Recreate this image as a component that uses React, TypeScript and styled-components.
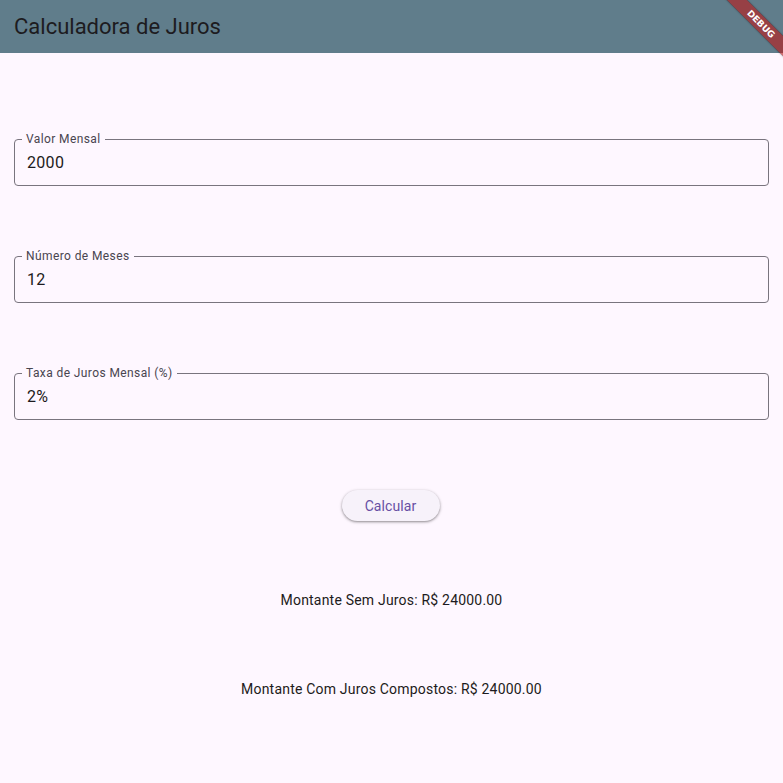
import React from "react";
import styled, { createGlobalStyle } from "styled-components";

const Global = createGlobalStyle`
  html, body { margin: 0; padding: 0; background: #fef7ff; }
  body { font-family: Roboto, "Noto Sans", sans-serif; color: #1d1b20; }
  * { box-sizing: border-box; }
`;

const Page = styled.div`
  min-height: 783px;
  background: #fef7ff;
  position: relative;
  overflow: hidden;
`;

const AppBar = styled.header`
  height: 53px;
  background: #607d8b;
  display: flex;
  align-items: center;
  padding: 0 14px;
`;

const Title = styled.h1`
  margin: 0;
  font-size: 22px;
  font-weight: 400;
  color: #1d1b20;
  letter-spacing: 0;
`;

const Body = styled.main`
  padding: 79px 14px 0;
  display: flex;
  flex-direction: column;
`;

const Field = styled.fieldset`
  margin: 0 0 63px;
  padding: 0 11px 7px;
  border: 1px solid #79747e;
  border-radius: 4px;
  min-width: 0;
`;

const Legend = styled.legend`
  padding: 0 4px;
  margin-left: -4px;
  font-size: 12px;
  line-height: 14px;
  color: #49454f;
  letter-spacing: 0.4px;
`;

const Input = styled.input`
  display: block;
  width: 100%;
  height: 30px;
  margin-top: 2px;
  line-height: 30px;
  border: none;
  outline: none;
  background: transparent;
  padding: 0 0 0 1px;
  font-family: Roboto, "Noto Sans", sans-serif;
  font-size: 16px;
  color: #1d1b20;
  letter-spacing: 0.3px;
`;

const ButtonRow = styled.div`
  display: flex;
  justify-content: center;
  margin-top: 7px;
`;

const Button = styled.button`
  width: 98px;
  height: 31px;
  margin-left: -2px;
  border: none;
  border-radius: 16px;
  background: #f7f2fa;
  box-shadow: 0 1px 2px rgba(0, 0, 0, 0.3), 0 1px 3px 1px rgba(0, 0, 0, 0.12);
  color: #6750a4;
  font-family: Roboto, "Noto Sans", sans-serif;
  font-size: 14px;
  font-weight: 400;
  letter-spacing: 0.1px;
  cursor: pointer;
`;

const Result = styled.p<{ $top: number }>`
  margin: ${(p) => p.$top}px 0 0;
  text-align: center;
  font-size: 14px;
  line-height: 20px;
  color: #1d1b20;
  letter-spacing: 0.2px;
`;

const BannerClip = styled.div`
  position: absolute;
  top: 0;
  right: 0;
  width: 100px;
  height: 100px;
  overflow: hidden;
  pointer-events: none;
`;

const Ribbon = styled.div`
  position: absolute;
  left: 78px;
  top: 24px;
  width: 120px;
  height: 14px;
  margin-left: -60px;
  margin-top: -7px;
  transform: rotate(45deg);
  background: rgba(183, 28, 28, 0.63);
  box-shadow: 0 0 2px rgba(0, 0, 0, 0.5);
  color: #fff;
  font-family: "DejaVu Sans", sans-serif;
  font-weight: 900;
  font-size: 9px;
  line-height: 14px;
  text-align: center;
  letter-spacing: 0;
`;

const fields = [
  { label: "Valor Mensal", value: "2000" },
  { label: "Número de Meses", value: "12" },
  { label: "Taxa de Juros Mensal (%)", value: "2%" },
];

export default function App() {
  return (
    <Page>
      <Global />
      <AppBar>
        <Title>Calculadora de Juros</Title>
      </AppBar>
      <Body>
        {fields.map((f) => (
          <Field key={f.label}>
            <Legend>{f.label}</Legend>
            <Input defaultValue={f.value} />
          </Field>
        ))}
        <ButtonRow>
          <Button>Calcular</Button>
        </ButtonRow>
        <Result $top={69}>Montante Sem Juros: R$ 24000.00</Result>
        <Result $top={69}>Montante Com Juros Compostos: R$ 24000.00</Result>
      </Body>
      <BannerClip>
        <Ribbon>DEBUG</Ribbon>
      </BannerClip>
    </Page>
  );
}
